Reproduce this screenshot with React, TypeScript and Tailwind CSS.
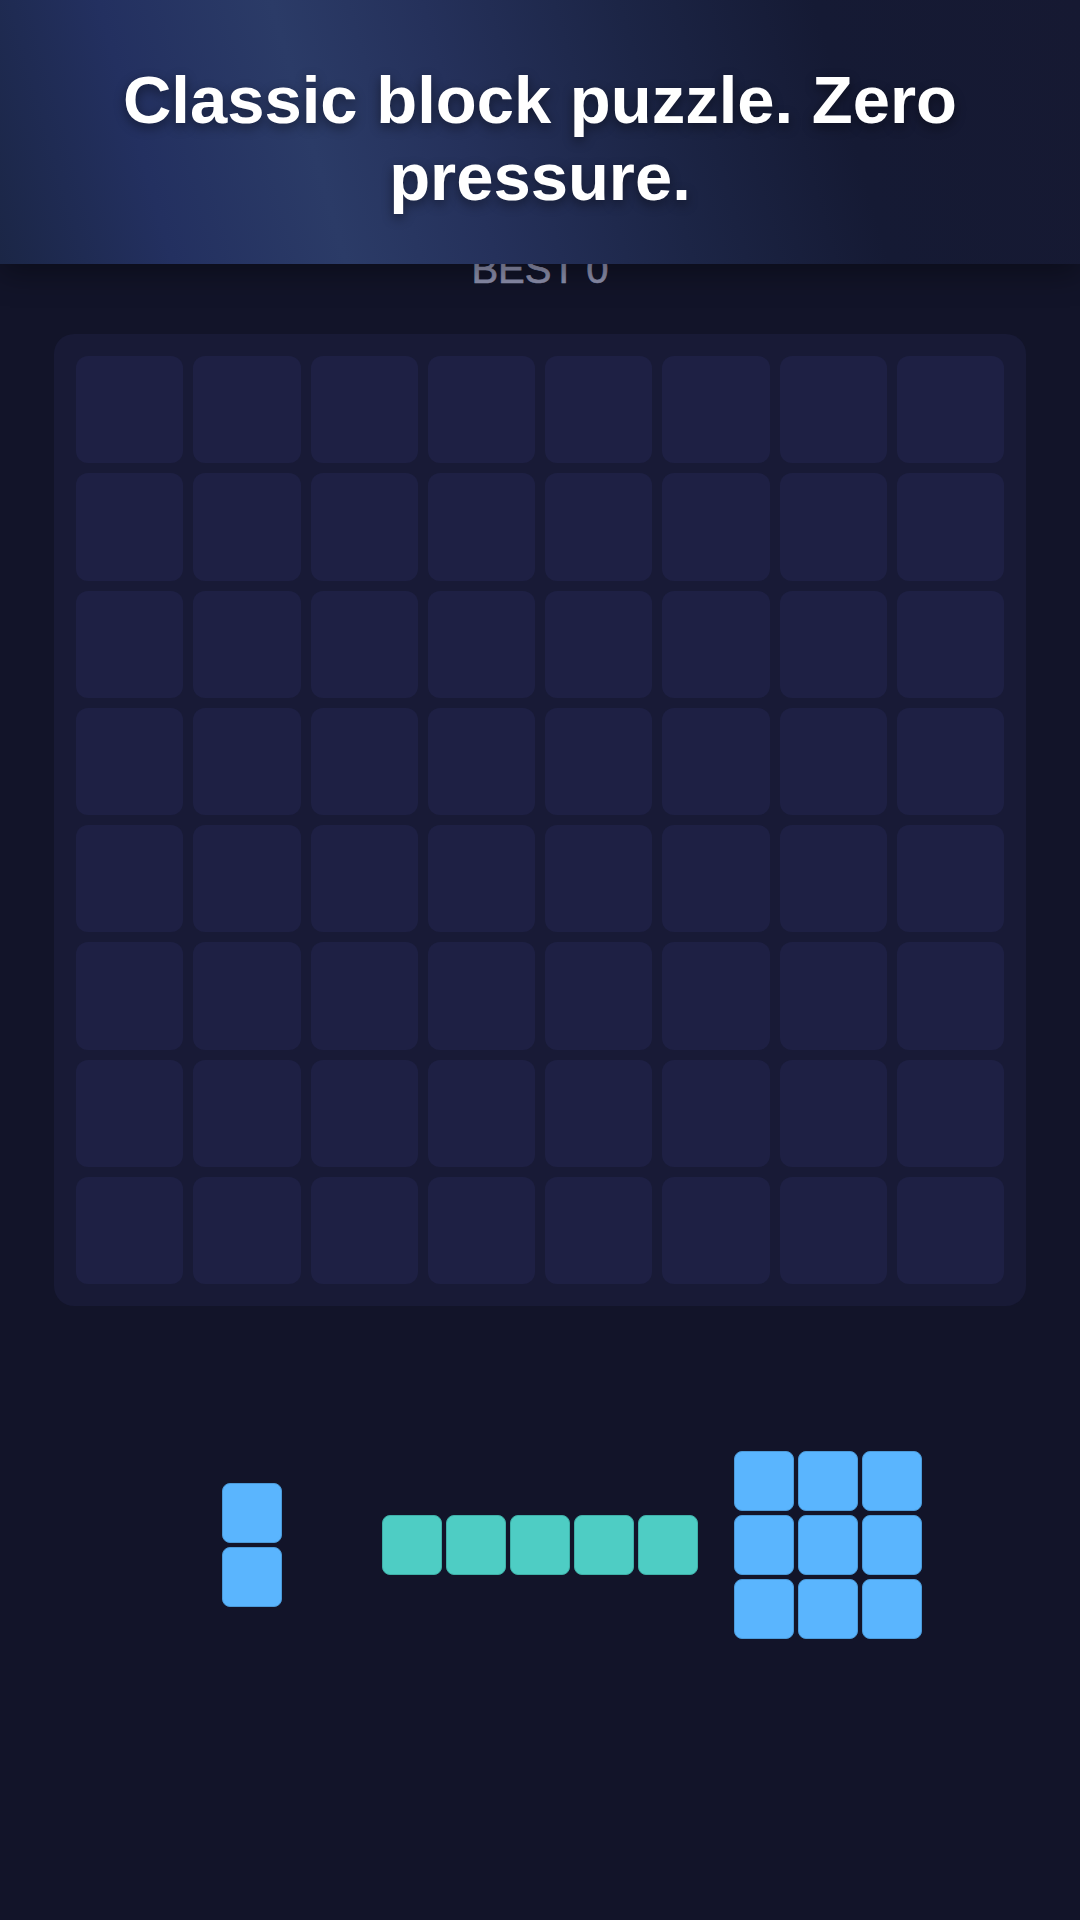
import React from "react";

const cells = Array.from({ length: 64 }, (_, i) => i);

function Piece({ rows, cols, color }: { rows: number; cols: number; color: "blue" | "teal" }) {
  const items = Array.from({ length: rows * cols }, (_, i) => i);
  const gridCols =
    cols === 1
      ? "grid-cols-[60px]"
      : cols === 3
      ? "grid-cols-[60px_60px_60px]"
      : "grid-cols-[60px_60px_60px_60px_60px]";
  const cellColor =
    color === "blue"
      ? "bg-[#5ab5fe] border-[#4b9ad9]"
      : "bg-[#4ecdc4] border-[#3fb0a8]";
  return (
    <div className={`grid ${gridCols} gap-[4px] shrink-0`}>
      {items.map((i) => (
        <div key={i} className={`w-[60px] h-[60px] rounded-[8px] border ${cellColor}`} />
      ))}
    </div>
  );
}

export default function App() {
  return (
    <div
      className="relative w-[1080px] min-h-[1920px] bg-[#121429] overflow-hidden"
      style={{ fontFamily: '"Liberation Sans", Arial, Helvetica, sans-serif' }}
    >
      <main className="flex flex-col items-center">
        <div className="h-[249px] w-full" />
        <div className="h-[40px] leading-[40px] text-[40px] font-normal text-[#8e91ae] [-webkit-text-stroke:0.7px_#8e91ae]">
          BEST 0
        </div>
        <div className="mt-[45px] w-[972px] p-[22px] rounded-[20px] bg-[#181a36] grid grid-cols-8 gap-[10px]">
          {cells.map((i) => (
            <div key={i} className="aspect-square rounded-[12px] bg-[#1e2044]" />
          ))}
        </div>
        <div className="mt-[79px] w-[864px] h-[320px] flex items-center">
          <div className="w-[288px] flex justify-center">
            <Piece rows={2} cols={1} color="blue" />
          </div>
          <div className="w-[288px] flex justify-center">
            <Piece rows={1} cols={5} color="teal" />
          </div>
          <div className="w-[288px] flex justify-center">
            <Piece rows={3} cols={3} color="blue" />
          </div>
        </div>
      </main>

      <header className="absolute top-0 left-0 right-0 h-[264px] pt-[61px] px-[80px] bg-[linear-gradient(74deg,#1b2646_0%,#233060_15%,#2b3b67_30%,#25315b_43%,#1c2546_60%,#151a34_77%,#161932_100%)] shadow-[0_10px_28px_rgba(0,0,0,0.35)]">
        <h1 className="text-center text-white font-bold text-[67px] leading-[77px] [text-shadow:0_4px_12px_rgba(0,0,0,0.45)]">
          Classic block puzzle. Zero pressure.
        </h1>
      </header>
    </div>
  );
}
